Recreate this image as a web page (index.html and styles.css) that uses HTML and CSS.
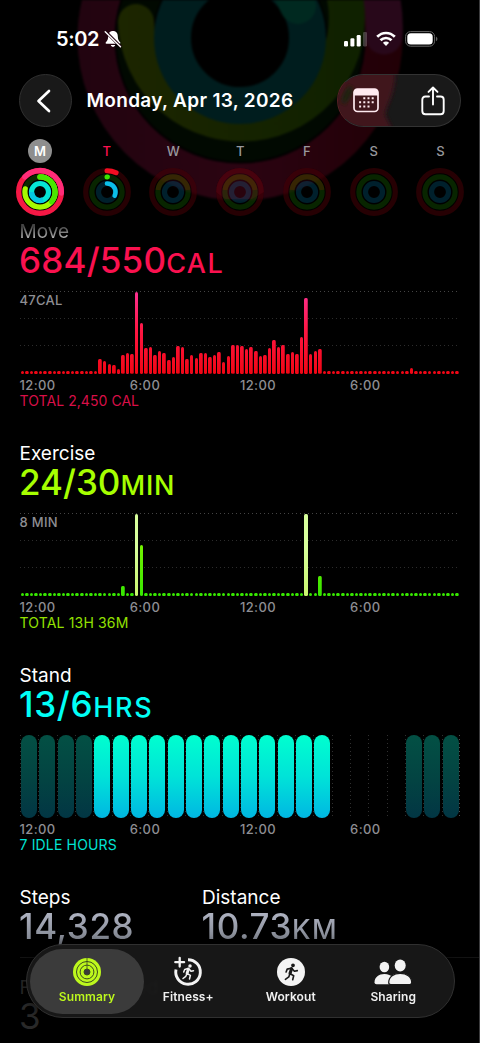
FILE: index.html
```html
<!DOCTYPE html>
<html lang="en">
<head>
<meta charset="utf-8">
<title>Activity Summary</title>
<link rel="stylesheet" href="styles.css">
</head>
<body>
<svg class="backdrop" width="480" height="210" viewBox="0 0 480 210" fill="none">
  <defs>
    <linearGradient id="bgMove" x1="78" y1="0" x2="402" y2="0" gradientUnits="userSpaceOnUse"><stop offset="0" stop-color="#220410"/><stop offset=".5" stop-color="#2b0412"/><stop offset="1" stop-color="#220006"/></linearGradient>
    <linearGradient id="bgEx" x1="116" y1="0" x2="364" y2="0" gradientUnits="userSpaceOnUse"><stop offset="0" stop-color="#1d2600"/><stop offset="1" stop-color="#0f2100"/></linearGradient>
  </defs>
  <circle cx="240" cy="38" r="144" stroke="url(#bgMove)" stroke-width="37"/>
  <path d="M381-4A144 144 0 0 1 384 36" stroke="#28081a" stroke-width="37" stroke-linecap="round"/>
  <circle cx="240" cy="38" r="105.500" stroke="#010901" stroke-width="36"/>
  <path d="M345-2A105.500 105.500 0 1 1 136 22" stroke="url(#bgEx)" stroke-width="36" stroke-linecap="round"/>
  <circle cx="240" cy="38" r="67.500" stroke="#001d1e" stroke-width="37"/>
  <path d="M285-20L298 6" stroke="#002920" stroke-width="36" stroke-linecap="round"/>
</svg>
<div class="screen">
  <div class="status">
    <span class="time">5:02</span>
    <svg class="bell" width="18" height="18" viewBox="0 0 18 18"><path d="M9 1C5.800 1 4.300 3.200 4.200 6.200C4.100 9.500 3.500 10.500 1.900 12.300C1.300 13 1.600 13.800 2.400 13.800H15.600C16.400 13.800 16.700 13 16.100 12.300C14.500 10.500 13.900 9.500 13.800 6.200C13.700 3.200 12.200 1 9 1Z" fill="#fff"/><path d="M6.800 15H11.200C10.800 17.400 7.200 17.400 6.800 15Z" fill="#fff"/><path d="M2.300 2.300L17 17" stroke="#220410" stroke-width="3"/><path d="M1.200 1.800L16.500 16.800" stroke="#fff" stroke-width="1.400" stroke-linecap="round"/></svg>
    <span class="status-icons">
      <svg width="23" height="16" viewBox="0 0 23 16" fill="#fff"><rect y="10" width="4" height="5.500" rx="1.200"/><rect x="6.400" y="7.200" width="4" height="8.300" rx="1.200"/><rect x="12.700" y="4" width="4" height="11.500" rx="1.200"/><rect x="19" y="1" width="4" height="14.500" rx="1.200" opacity=".22"/></svg>
      <svg width="20" height="16" viewBox="0 0 20 16" fill="none" stroke="#fff" stroke-width="2.700"><path d="M1.200 5.800C6.200.7 13.800.7 18.800 5.800"/><path d="M4.500 9.300C7.700 6.200 12.300 6.200 15.500 9.300"/><path d="M10 15L6.900 11.800C8.600 10.200 11.400 10.200 13.100 11.800Z" fill="#fff" stroke="none"/></svg>
      <svg width="33" height="16" viewBox="0 0 33 16"><rect x=".6" y=".6" width="29" height="14.600" rx="5" fill="none" stroke="#666" stroke-width="1"/><rect x="2.300" y="2.300" width="25.400" height="11.200" rx="3.500" fill="#fff"/><path d="M31.200 5.500Q33.600 7.900 31.200 10.300Z" fill="#777"/></svg>
    </span>
  </div>
  <header class="topbar">
    <div class="back"><svg width="16" height="24" viewBox="0 0 16 24" fill="none" stroke="#fff" stroke-width="2.700" stroke-linecap="round" stroke-linejoin="round"><path d="M13 2L2.500 12L13 22"/></svg></div>
    <h1 class="title">Monday, Apr 13, 2026</h1>
    <div class="actions">
      <svg class="tint" width="122" height="51" viewBox="0 0 122 51"><defs><filter id="soft"><feGaussianBlur stdDeviation="2"/></filter></defs><path d="M-6-6H57C58 18 49 28 47 40L56 58H-6Z" fill="#40121d" filter="url(#soft)"/><ellipse cx="9" cy="20" rx="4" ry="10" transform="rotate(25 9 20)" fill="#1d2410" filter="url(#soft)"/></svg>
      <svg width="26" height="25" viewBox="0 0 26 25"><rect x="1" y="1" width="24" height="22.500" rx="3.500" fill="none" stroke="#ffeaf0" stroke-width="1.700"/><path d="M1 7.500V4Q1 1 4 1H22Q25 1 25 4V7.500Z" fill="#ffeaf0"/><g fill="#ffeaf0"><path d="M10.300 9.200h2v2h-2zM14.500 9.200h2v2h-2zM18.700 9.200h2v2h-2zM6.100 13.300h2v2h-2zM10.300 13.300h2v2h-2zM14.500 13.300h2v2h-2zM18.700 13.300h2v2h-2zM6.100 17.500h2v2h-2zM10.300 17.500h2v2h-2zM14.500 17.500h2v2h-2z"/></g></svg>
      <svg width="24" height="30" viewBox="0 0 24 30" fill="none" stroke="#fff" stroke-width="1.900" stroke-linecap="round" stroke-linejoin="round"><path d="M8 10.500H4.500Q1.300 10.500 1.300 13.700V25Q1.300 28.300 4.500 28.300H19.500Q22.700 28.300 22.700 25V13.700Q22.700 10.500 19.500 10.500H16"/><path d="M12 18.500V1.700M7.500 5.900L12 1.500L16.500 5.900"/></svg>
    </div>
  </header>
  <nav class="week" id="week"></nav>
  <main>
    <section class="metric move">
      <h2 class="first">Move</h2>
      <p class="value">684/550<small>CAL</small></p>
      <div class="chart bars" id="move"><span class="scale">47CAL</span></div>
      <div class="axis"><span>12:00</span><span>6:00</span><span>12:00</span><span>6:00</span></div>
      <p class="total">TOTAL 2,450 CAL</p>
    </section>
    <section class="metric exercise">
      <h2>Exercise</h2>
      <p class="value">24/30<small>MIN</small></p>
      <div class="chart bars" id="exercise"><span class="scale">8 MIN</span></div>
      <div class="axis"><span>12:00</span><span>6:00</span><span>12:00</span><span>6:00</span></div>
      <p class="total">TOTAL 13H 36M</p>
    </section>
    <section class="metric stand">
      <h2>Stand</h2>
      <p class="value">13/6<small>HRS</small></p>
      <div class="chart hours" id="stand"></div>
      <div class="axis"><span>12:00</span><span>6:00</span><span>12:00</span><span>6:00</span></div>
      <p class="total">7 IDLE HOURS</p>
    </section>
    <section class="stats">
      <div class="stat"><h2>Steps</h2><p class="value">14,328</p></div>
      <div class="stat"><h2>Distance</h2><p class="value">10.73<small>KM</small></p></div>
    </section>
    <section class="flights"><h2>Flights Climbed</h2><p class="value">3</p></section>
  </main>
</div>
<nav class="tabs">
  <div class="tab active">
    <svg width="30" height="30" viewBox="-15 -15 30 30" fill="none"><circle r="14" fill="#bdf81d"/><g stroke="#3a4a20" stroke-width="1"><circle r="10.500"/><circle r="6.900"/><circle r="3" fill="#3a3a3a"/></g><path d="M0-14V-3" stroke="#3a4a20" stroke-width=".8"/></svg>
    <span>Summary</span>
  </div>
  <div class="tab">
    <svg width="30" height="30" viewBox="-15 -15 30 30" fill="none" stroke="#f3f3f3" stroke-linecap="round" stroke-linejoin="round"><path d="M0-12.300A12.300 12.300 0 1 1-12-2.500" stroke-width="2.900" stroke-linecap="butt"/><path d="M-8.300-14.200V-5.400M-12.700-9.800H-3.900" stroke-width="2.300"/><g stroke-width="1.500"><circle cx="2" cy="-6" r="1" fill="#f3f3f3"/><path d="M.5-3L-1 1.500" stroke-width="2.800"/><path d="M0-3.400L-3.300-2.600L-4.300 0M1.600-2.400L3-.7L5.500-1.300M-.8 1.700L2.400 3.300L1.500 7M-1.300 2.300L-2.200 4.300L-5 6.500"/></g></svg>
    <span>Fitness+</span>
  </div>
  <div class="tab">
    <svg width="30" height="30" viewBox="-15 -15 30 30" fill="none" stroke="#181818" stroke-linecap="round" stroke-linejoin="round"><circle r="14" fill="#f3f3f3" stroke="none"/><g stroke-width="1.600"><circle cx="2" cy="-6.700" r="1.100" fill="#181818"/><path d="M.6-3.300L-1 1.500" stroke-width="3.100"/><path d="M0-3.800L-3.800-2.900L-4.900 0M1.800-2.600L3.400-.7L6.300-1.400M-.8 1.800L2.700 3.700L1.700 7.700M-1.300 2.500L-2.200 4.900L-5.600 7.300"/></g></svg>
    <span>Workout</span>
  </div>
  <div class="tab">
    <svg width="38" height="30" viewBox="0 0 38 30" fill="#f3f3f3"><ellipse cx="10.400" cy="10" rx="4.800" ry="5.300"/><path d="M.5 25.500C.5 20 5 17 10.400 17C14 17 17 18.200 19 20.500L17 27.300H2.500Q.5 27.300.5 25.500Z"/><path d="M14.700 25.500C14.700 19.500 20 16.300 26.200 16.300C32.500 16.300 37.700 19.500 37.700 25.500Q37.700 27.500 35.700 27.500H16.700Q14.700 27.500 14.700 25.500Z" stroke="#181818" stroke-width="1.200"/><ellipse cx="26.200" cy="8.600" rx="5.500" ry="6"/></svg>
    <span>Sharing</span>
  </div>
</nav>
<script src="script.js"></script>
</body>
</html>
```
FILE: styles.css
```css
* { box-sizing: border-box; margin: 0; padding: 0; }
html, body { width: 480px; height: 1043px; overflow: hidden; background: #000; }
body { position: relative; font-family: Inter, "Liberation Sans", sans-serif; color: #fff; border-right: 1px solid #3c3c3e; }
svg { display: block; flex: none; }
h1, h2 { font-weight: 400; }
.backdrop { position: absolute; left: 0; top: 0; filter: blur(1.2px); }
.screen { position: relative; height: 1043px; overflow: hidden; }

.status { display: flex; align-items: center; height: 74px; padding: 4px 0 0 56px; }
.time { font-size: 20px; font-weight: 600; letter-spacing: -0.4px; width: 47.500px; }
.status-icons { display: flex; align-items: center; gap: 9px; margin-left: 222.500px; }

.topbar { display: flex; align-items: center; height: 53px; padding: 0 0 0 19px; }
.back { width: 53px; height: 53px; border-radius: 50%; background: #191919; border: 1px solid #303030; display: flex; align-items: center; justify-content: center; padding-right: 3px; }
.title { width: 250.500px; margin-left: 14.500px; font-size: 19px; line-height: 26px; padding-top: 1px; font-weight: 600; white-space: nowrap; letter-spacing: 0.32px; }
.actions { position: relative; display: flex; align-items: center; justify-content: space-between; width: 124px; height: 53px; padding: 0 15px; border-radius: 27px; border: 1px solid #333; border-left-color: #572024; background: #191919; overflow: hidden; flex: none; }
.actions svg { position: relative; }
.actions .tint { position: absolute; left: 0; top: 0; }

.week { display: grid; grid-template-columns: repeat(7, 66.750px); padding: 12px 0 0 6.500px; height: 92px; }
.day { display: flex; flex-direction: column; align-items: center; gap: 4px; }
.day span { width: 24px; height: 24px; line-height: 24px; border-radius: 50%; text-align: center; font-size: 13px; font-weight: 500; color: #98989d; }
.day .today { background: #8e8e8e; color: #fff; font-weight: 600; }
.day .latest { color: #fa114f; }

.metric { height: 222px; padding: 1px 0 0 20px; }
h2 { font-size: 19px; line-height: 24px; height: 24px; white-space: nowrap; margin-left: -0.500px; }
h2.first { width: 60px; color: transparent; background: linear-gradient(#444 25%, #d0d0d0 90%); background-clip: text; -webkit-background-clip: text; }
.value { font-size: 35px; line-height: 32px; height: 35px; font-weight: 500; white-space: nowrap; letter-spacing: 0.2px; margin-left: -1px; }
.value small { font-size: 27px; line-height: 0; font-weight: 500; letter-spacing: 1.4px; }
.exercise .value { letter-spacing: 0; }
.exercise .value small { letter-spacing: 0.8px; }
.stand .value { letter-spacing: 0.7px; }
.stand .value small { letter-spacing: 1.7px; }
.move .value { color: #fa114f; }
.exercise .value { color: #a6ff00; }
.stand .value { color: #00fff6; }
.chart { display: flex; position: relative; height: 83px; margin-top: 12px; width: 440px; }
.bars { align-items: flex-end; background: linear-gradient(90deg, #444 1px, transparent 1px) 0 0 / 4px 1px repeat-x, linear-gradient(90deg, #2c2c2c 1px, transparent 1px) 0 27px / 4px 1px repeat-x, linear-gradient(90deg, #2c2c2c 1px, transparent 1px) 0 54px / 4px 1px repeat-x; }
.scale { position: absolute; left: -0.500px; top: 1px; font-size: 13px; line-height: 16px; font-weight: 500; letter-spacing: 0.3px; color: #8e8e93; }
.bars i { flex: 1; display: flex; justify-content: center; height: 83px; align-items: flex-end; }
.bars b { width: 3.500px; border-radius: 1.500px; }
.move b { background: linear-gradient(0deg, #f00614, #ff1744 45px, #fb3192 83px) bottom / 100% 83px; }
.exercise b { background: linear-gradient(0deg, #35e600, #80f500 60px) bottom / 100% 83px; }
.exercise b.peak { background: linear-gradient(0deg, #c9f56e, #d8ff9c 60%); }
.axis { display: grid; grid-template-columns: repeat(4, 110.200px); margin: 3px 0 0 -0.500px; font-size: 13px; line-height: 16px; font-weight: 500; letter-spacing: 0.4px; color: #8e8e93; }
.total { font-size: 14px; line-height: 16px; white-space: nowrap; margin-left: -0.500px; letter-spacing: 0.06px; }
.exercise .total, .stand .total { letter-spacing: 0.16px; }
.move .total { color: #d80f48; }
.exercise .total { color: #93e000; }
.stand .total { color: #00e3d5; }
.hours i { flex: 1; display: flex; justify-content: center; background: linear-gradient(#303030 1px, transparent 1px) 0 0 / 1px 4px repeat-y; }
.hours { background: linear-gradient(#505050 1px, transparent 1px) right 0 top 0 / 1px 4px repeat-y; }
.hours b { width: 16px; height: 83px; border-radius: 8px; }
.hours b.on { background: linear-gradient(#00ffcf, #00e3d8 50%, #00b7e2); }
.hours b.idle { background: linear-gradient(#035044, #034342 55%, #023644); }

.stats { display: grid; grid-template-columns: 182.500px 1fr; height: 72px; padding: 1px 0 0 20px; }
.stats .value { letter-spacing: 0.6px; color: transparent; background: linear-gradient(#b3b7c6, #7c818b); background-clip: text; -webkit-background-clip: text; }
.flights { border-top: 1px solid #131313; margin-left: 20px; padding-top: 18px; }
.flights h2 { color: #292929; }
.flights .value { color: #292929; font-weight: 400; }

.tabs { position: absolute; left: 26px; top: 944px; width: 429px; height: 74px; border-radius: 37px; border: 1px solid #303030; background: rgba(25,25,25,.9); backdrop-filter: blur(1.5px); display: flex; padding: 3.500px 2px 3.500px 3px; box-shadow: 0 0 12px rgba(0,0,0,.6); }
.tab { display: flex; flex-direction: column; align-items: center; justify-content: flex-start; padding-top: 8.500px; width: 102.500px; height: 65px; gap: 2px; font-size: 12px; line-height: 16px; font-weight: 600; color: #f0f0f0; letter-spacing: 0.1px; }
.tab svg { overflow: visible; }
.tab span { white-space: nowrap; }
.tab.active { width: 114px; margin-right: -7px; border-radius: 33px; background: #3b3b3b; color: #bdf81d; }
```
FILE: script.js
```js
function fill(id, heights, peaks) {
  const chart = document.getElementById(id);
  for (let i = 0; i < 96; i++) {
    const slot = document.createElement('i');
    const bar = document.createElement('b');
    bar.style.height = (heights[i] || 3) + 'px';
    if (peaks.includes(i)) bar.className = 'peak';
    slot.appendChild(bar);
    chart.appendChild(slot);
  }
}
const move = { 85: 6.3 };
[15, 13.3, 10.3, 8.7, 4.7, 18.7, 20.7, 19.7, 82.5, 51, 25.7, 26.7, 19, 23, 20.7, 14, 17.3, 27.7, 26.7, 15, 18.7, 16.3, 21, 21,
 16.7, 19, 22.3, 12, 17.7, 28.7, 28.7, 28, 25.3, 27.3, 22.7, 17.7, 18.7, 25.7, 34.3, 26.7, 28.7, 19.7, 21.7, 20.3, 37.3, 76.3,
 20.3, 23, 24.7].forEach((h, n) => { move[n + 17] = h; });
fill('move', move, []);
fill('exercise', { 22: 10, 25: 82.5, 26: 51, 62: 82.5, 65: 20 }, [25, 62]);

const stand = document.getElementById('stand');
for (let i = 0; i < 24; i++) {
  const state = i < 4 || i > 20 ? 'idle' : i < 17 ? 'on' : '';
  stand.insertAdjacentHTML('beforeend', '<i>' + (state ? '<b class="' + state + '"></b>' : '') + '</i>');
}

function ring(r, color, part, width) {
  const len = 2 * Math.PI * r;
  return '<circle r="' + r + '" stroke="' + color + '" stroke-width="' + width + '" stroke-linecap="round" transform="rotate(-90)"' +
    (part < 1 ? ' stroke-dasharray="' + len * part + ' ' + len + '"' : '') + '/>';
}
const base = ring(21.3, 'rgba(255,0,20,.15)', 1, 5.2) + ring(15.1, 'rgba(50,220,0,.17)', 1, 5.2) + ring(8.5, 'rgba(0,160,220,.2)', 1, 5.2);
const week = document.getElementById('week');
['M', 'T', 'W', 'T', 'F', 'S', 'S'].forEach((name, i) => {
  let rings = base;
  if (i === 0) {
    rings = ring(21.3, '#f51845', 1, 5.4) + '<path d="M-15.1 -15.1A21.3 21.3 0 0 1 21.3 1" stroke="#ff2c78" stroke-width="5.4" stroke-linecap="round"/>' +
      ring(15.1, '#0b2b00', 1, 5.2) + ring(15.1, '#a5fa00', .78, 5.2) + ring(15.1, '#49e600', .36, 5.2) +
      ring(8.5, '#06e5d5', 1, 5.2) + '<path d="M-8.5 0A8.5 8.5 0 0 0 3 8" stroke="#05c7e2" stroke-width="5.2"/>';
  } else if (i === 1) {
    rings += ring(21.3, '#f40d22', .07, 5) + ring(15.1, '#3be500', .005, 5) + ring(8.5, '#0bbfe8', .32, 4.6);
  } else if (i >= 2 && i <= 4) {
    const glow = i === 3 ? '<path d="M-24 0A24 24 0 0 1 24 0L12 7L-15 7Z" fill="rgba(255,30,70,.08)"/>' : '';
    rings += glow + '<path d="M-15 -2A15.1 15.1 0 0 1 15 -2" stroke="rgba(120,40,0,.3)" stroke-width="5"/>';
  }
  const cls = i === 0 ? 'today' : i === 1 ? 'latest' : '';
  week.insertAdjacentHTML('beforeend', '<div class="day"><span class="' + cls + '">' + name + '</span>' +
    '<svg width="50" height="50" viewBox="-25 -25 50 50" fill="none"><circle r="24" fill="rgba(0,0,0,.45)"/>' + rings + '</svg></div>');
});
```
